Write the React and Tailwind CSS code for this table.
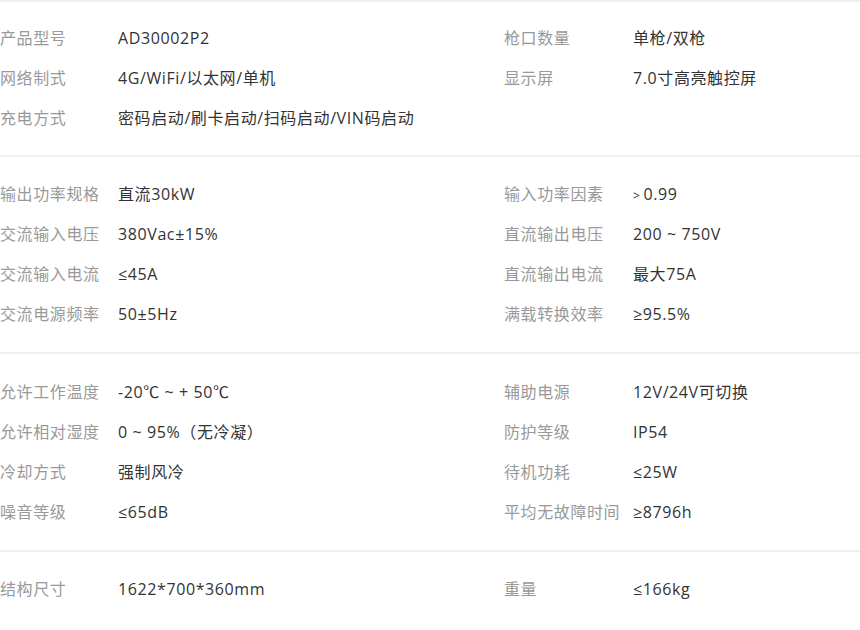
import React from 'react'

const sections = [
  {
    pad: 'pt-4 pb-[17px]',
    rows: [
      ['产品型号', 'AD30002P2', '枪口数量', '单枪/双枪'],
      ['网络制式', '4G/WiFi/以太网/单机', '显示屏', '7.0寸高亮触控屏'],
      ['充电方式', '密码启动/刷卡启动/扫码启动/VIN码启动', '', ''],
    ],
  },
  {
    pad: 'pt-[17px] pb-[18px]',
    rows: [
      ['输出功率规格', '直流30kW', '输入功率因素', <><span className="text-[12px] mr-[3px]">&gt;</span>0.99</>],
      ['交流输入电压', '380Vac±15%', '直流输出电压', '200 ~ 750V'],
      ['交流输入电流', '≤45A', '直流输出电流', '最大75A'],
      ['交流电源频率', '50±5Hz', '满载转换效率', '≥95.5%'],
    ],
  },
  {
    pad: 'pt-[18px] pb-[18px]',
    rows: [
      ['允许工作温度', '-20℃  ~ + 50℃', '辅助电源', '12V/24V可切换'],
      ['允许相对湿度', '0 ~ 95%（无冷凝）', '防护等级', 'IP54'],
      ['冷却方式', '强制风冷', '待机功耗', '≤25W'],
      ['噪音等级', '≤65dB', '平均无故障时间', '≥8796h'],
    ],
  },
  {
    pad: 'pt-[17px] pb-[18px]',
    rows: [
      ['结构尺寸', '1622*700*360mm', '重量', '≤166kg'],
    ],
  },
]

const Row = ({ row }) => {
  const [l1, v1, l2, v2] = row
  return (
    <div className="flex h-10 items-center whitespace-nowrap">
      <div className="flex w-[504px] items-center">
        <span className="w-[118px] text-[#999]">{l1}</span>
        <span className="text-[#333]">{v1}</span>
      </div>
      <div className="flex items-center">
        <span className="w-[129px] text-[#999]">{l2}</span>
        <span className="text-[#333]">{v2}</span>
      </div>
    </div>
  )
}

export default function App() {
  return (
    <div
      className="w-[860px] h-[630px] bg-white text-[16px] tracking-[0.6px] overflow-hidden"
      style={{ fontFamily: '"Open Sans", "Noto Sans CJK SC", sans-serif' }}
    >
      {sections.map((s, i) => (
        <div key={i} className={`border-t-2 border-[#f0f0f0] ${s.pad}`}>
          {s.rows.map((r, j) => <Row key={j} row={r} />)}
        </div>
      ))}
    </div>
  )
}
